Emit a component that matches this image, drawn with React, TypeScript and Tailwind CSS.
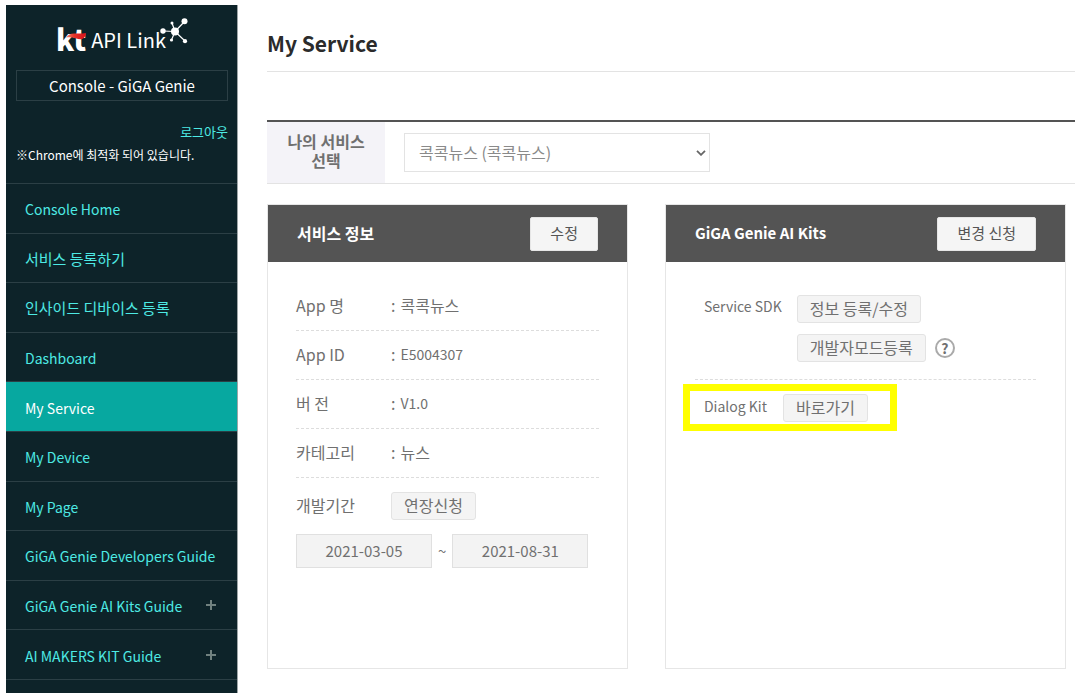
import type { ReactNode } from "react";

const FONT = "font-['Noto_Sans_CJK_KR',sans-serif]";

type MenuItem = { label: string; korean?: boolean; active?: boolean; expandable?: boolean };

const MENU: MenuItem[] = [
  { label: "Console Home" },
  { label: "서비스 등록하기", korean: true },
  { label: "인사이드 디바이스 등록", korean: true },
  { label: "Dashboard" },
  { label: "My Service", active: true },
  { label: "My Device" },
  { label: "My Page" },
  { label: "GiGA Genie Developers Guide" },
  { label: "GiGA Genie AI Kits Guide", expandable: true },
  { label: "AI MAKERS KIT Guide", expandable: true },
];

const INFO = [
  { term: "App 명", value: "콕콕뉴스", korean: true },
  { term: "App ID", value: "E5004307" },
  { term: "버 전", value: "V1.0" },
  { term: "카테고리", value: "뉴스", korean: true },
];

function Logo() {
  return (
    <a href="#" className="flex h-[46px] items-start justify-center text-white">
      <span className="relative mt-3 text-[29px] leading-[34px] font-black">
        kt
        <svg viewBox="0 0 20 8" className="absolute top-[11px] left-[10px] h-2 w-5" aria-hidden="true">
          <defs>
            <linearGradient id="swoosh" x1="0" x2="1">
              <stop offset="0" stopColor="#f08a74" />
              <stop offset="0.4" stopColor="#e5332a" />
              <stop offset="1" stopColor="#d8121b" />
            </linearGradient>
          </defs>
          <path d="M0 5.500C2 2.500 5 1.200 9 1.400c4 .2 7 .2 11-.4-.3 3.500-2 6-5 6.300C11 7.500 6 4 0 5.500Z" fill="url(#swoosh)" />
        </svg>
      </span>
      <span className="mt-[13px] ml-[5px] text-[20px] leading-[36px]">API Link</span>
      <svg viewBox="0 0 28 28" className="mt-2 -ml-[6px] h-7 w-7" fill="#fff" stroke="#fff" aria-hidden="true">
        <path d="M15 14.500 24.500 4.500M15 14.500 3 14M15 14.500 12 6M15 14.500 11.500 23M15 14.500 25 24" strokeWidth="1.200" />
        <g stroke="none">
          <circle cx="15" cy="14.500" r="4" />
          <circle cx="24.500" cy="4.200" r="3" />
          <circle cx="3" cy="14" r="2.700" />
          <circle cx="12" cy="6" r="1.500" />
          <circle cx="11.500" cy="23" r="1.600" />
          <circle cx="25" cy="24.200" r="2.100" />
        </g>
      </svg>
    </a>
  );
}

function Sidebar() {
  return (
    <aside className="w-[232px] shrink-0 border-r border-[#9da5a7] bg-[#0d2329]">
      <div className="flex h-[178px] flex-col pt-1 pr-[9px] pl-[10px]">
        <Logo />
        <div className="mt-[15px] flex h-[31px] items-center justify-center border border-[#2b3f45] text-[15px] leading-[20px] text-white">
          Console - GiGA Genie
        </div>
        <a href="#" className="mt-[21px] self-end text-[13px] leading-[20px] text-[#4deae4]">
          로그아웃
        </a>
        <p className="mt-[3px] text-[12px] leading-[20px] whitespace-nowrap text-white">
          ※Chrome에 최적화 되어 있습니다.
        </p>
      </div>
      <nav>
        <ul className="grid h-[497px] auto-rows-fr border-b border-[#2b3f45]">
          {MENU.map((item) => (
            <li key={item.label} className="border-t border-[#2b3f45]">
              <a
                href="#"
                className={
                  "flex h-full items-center justify-between pt-[2px] pr-5 pl-[19px] leading-[20px] " +
                  (item.korean ? "text-[15px] " : "text-[14px] ") +
                  (item.active ? "bg-[#07a8a0] text-white" : "text-[#4deae4]")
                }
              >
                {item.label}
                {item.expandable && (
                  <svg viewBox="0 0 12 12" className="mb-[2px] size-3" stroke="#70817f" strokeWidth="2" aria-hidden="true">
                    <path d="M6 1v10M1 6h10" />
                  </svg>
                )}
              </a>
            </li>
          ))}
        </ul>
      </nav>
    </aside>
  );
}

function SmallButton({ children }: { children: ReactNode }) {
  return (
    <button
      type="button"
      className="h-7 rounded-[3px] border border-[#e3e3e3] bg-[#f4f4f4] px-3 pb-[2px] text-[16px] leading-[24px] whitespace-nowrap text-[#707070]"
    >
      {children}
    </button>
  );
}

function Card({ title, action, children }: { title: ReactNode; action: string; children: ReactNode }) {
  return (
    <section className="min-h-[465px] border border-[#e6e6e6]">
      <header className="flex h-[57px] items-center justify-between bg-[#545454] px-[29px]">
        <h2 className="pb-[2px] text-[16px] font-bold text-white">{title}</h2>
        <button
          type="button"
          className="h-[34px] rounded-[2px] border border-[#e6e6e6] bg-[#f5f5f5] px-[19px] pb-[2px] text-[15px] leading-[24px] text-[#555]"
        >
          {action}
        </button>
      </header>
      {children}
    </section>
  );
}

export default function App() {
  return (
    <div className={"flex min-h-screen bg-white pt-[5px] pb-[7px] pl-[6px] text-[#707070] " + FONT}>
      <Sidebar />
      <main className="min-w-0 flex-1 pr-[2px] pl-[29px]">
        <h1 className="flex h-[67px] items-center border-b border-[#e3e3e3] pt-3 text-[21px] font-bold text-[#2b2b2b]">
          My Service
        </h1>
        <div className="mt-12 flex h-16 border-t-2 border-b border-t-[#545454] border-b-[#e3e3e3]">
          <label
            htmlFor="service"
            className="flex w-[118px] items-center justify-center bg-[#f4f3f8] px-4 pb-1 text-center text-[16px] leading-[19px] font-bold"
          >
            나의 서비스 선택
          </label>
          <div className="relative my-[11px] ml-[19px] w-[306px]">
            <select
              id="service"
              className="h-full w-full appearance-none rounded-none border border-[#e3e3e3] bg-white pb-[2px] pl-[14px] text-[16px] text-[#8a8a8a]"
            >
              <option>콕콕뉴스 (콕콕뉴스)</option>
            </select>
            <svg
              viewBox="0 0 10 6"
              className="pointer-events-none absolute top-[17px] right-1 h-[6px] w-[10px]"
              fill="none"
              stroke="#666"
              strokeWidth="1.800"
              aria-hidden="true"
            >
              <path d="M1 .8 5 4.800 9 .8" />
            </svg>
          </div>
        </div>

        <div className="mt-5 mr-[9px] grid grid-cols-[9fr_10fr] gap-[37px]">
          <Card title="서비스 정보" action="수정">
            <div className="px-[28px] pt-[20px]">
              <dl className="text-[16px]">
                {INFO.map((row) => (
                  <div key={row.term} className="flex h-[49px] items-center border-b border-dashed border-[#ddd] pb-[2px]">
                    <dt className="w-[95px]">{row.term}</dt>
                    <dd className="flex items-center gap-[5px]">
                      <span>:</span>
                      <span className={row.korean ? "text-[16px]" : "text-[14px]"}>{row.value}</span>
                    </dd>
                  </div>
                ))}
                <div className="flex h-14 items-center">
                  <dt className="w-[95px] pb-[2px]">개발기간</dt>
                  <dd>
                    <SmallButton>연장신청</SmallButton>
                  </dd>
                </div>
              </dl>
              <div className="flex items-center gap-[6px] text-[15px]">
                <input
                  aria-label="시작일"
                  readOnly
                  value="2021-03-05"
                  className="h-[34px] w-[136px] border border-[#e0e0e0] bg-[#f3f3f3] pb-[2px] text-center"
                />
                ~
                <input
                  aria-label="종료일"
                  readOnly
                  value="2021-08-31"
                  className="h-[34px] w-[136px] border border-[#e0e0e0] bg-[#f3f3f3] pb-[2px] text-center"
                />
              </div>
            </div>
          </Card>

          <Card title={<span className="text-[15px]">GiGA Genie AI Kits</span>} action="변경 신청">
            <div className="px-[29px] pt-[33px] text-[14px]">
              <div className="flex h-[85px] gap-[15px] border-b border-dashed border-[#ddd] pl-[9px]">
                <span className="leading-[22px]">Service SDK</span>
                <div className="flex flex-col items-start gap-[11px]">
                  <SmallButton>정보 등록/수정</SmallButton>
                  <div className="flex items-center gap-[9px]">
                    <SmallButton>개발자모드등록</SmallButton>
                    <button
                      type="button"
                      aria-label="도움말"
                      className="flex size-5 items-center justify-center rounded-full border-2 border-[#aaa] text-[14px] leading-none font-bold"
                    >
                      ?
                    </button>
                  </div>
                </div>
              </div>
              <div className="relative mt-[14px] flex w-fit gap-4 pl-[9px]">
                <span className="leading-[24px]">Dialog Kit</span>
                <SmallButton>바로가기</SmallButton>
                <div className="pointer-events-none absolute -top-[10px] -right-[29px] -bottom-[9px] -left-[12px] border-[7px] border-[#ffff00]" />
              </div>
            </div>
          </Card>
        </div>
      </main>
    </div>
  );
}
